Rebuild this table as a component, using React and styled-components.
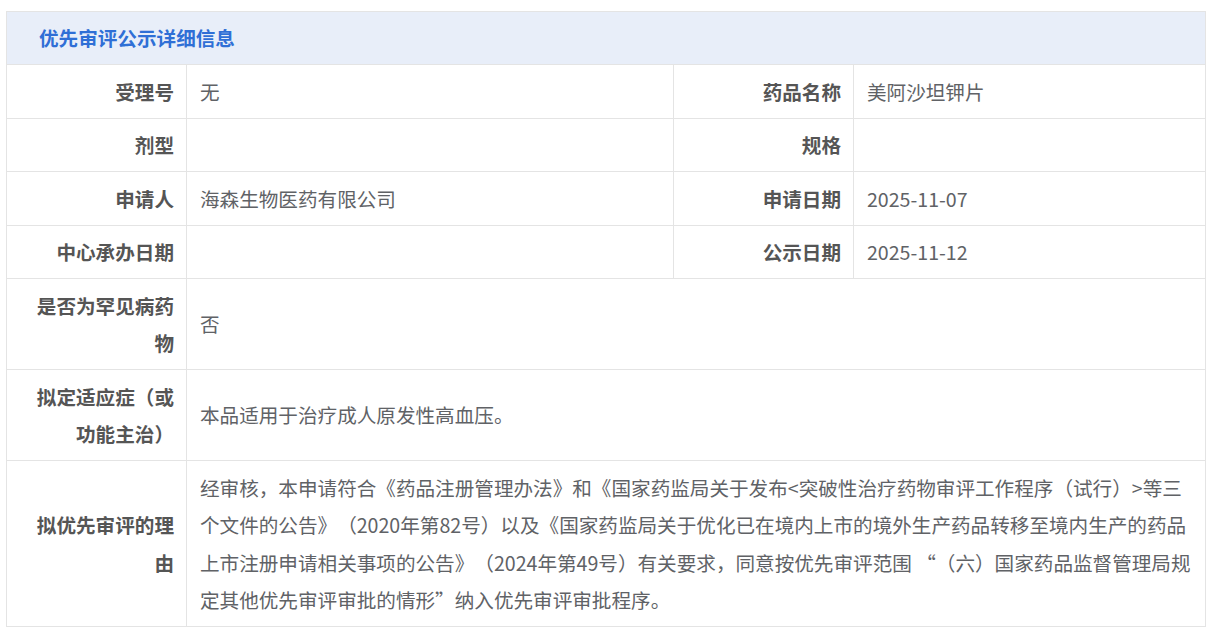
import React from "react";
import styled, { createGlobalStyle } from "styled-components";

const detail = {
  acceptNo: "无",
  drugName: "美阿沙坦钾片",
  dosageForm: "",
  spec: "",
  applicant: "海森生物医药有限公司",
  applyDate: "2025-11-07",
  centerDate: "",
  publicDate: "2025-11-12",
  rareDisease: "否",
  indication: "本品适用于治疗成人原发性高血压。",
  reason:
    "经审核，本申请符合《药品注册管理办法》和《国家药监局关于发布<突破性治疗药物审评工作程序（试行）>等三个文件的公告》（2020年第82号）以及《国家药监局关于优化已在境内上市的境外生产药品转移至境内生产的药品上市注册申请相关事项的公告》（2024年第49号）有关要求，同意按优先审评范围 “（六）国家药品监督管理局规定其他优先审评审批的情形”纳入优先审评审批程序。",
};

function App() {
  return (
    <>
      <GlobalStyle />
      <Page>
        <DetailTable>
          <colgroup>
            <col style={{ width: "180px" }} />
            <col style={{ width: "487px" }} />
            <col style={{ width: "180px" }} />
            <col />
          </colgroup>
          <thead>
            <tr>
              <HeaderCell colSpan={4}>优先审评公示详细信息</HeaderCell>
            </tr>
          </thead>
          <tbody>
            <tr>
              <Label>受理号</Label>
              <Value>{detail.acceptNo}</Value>
              <Label>药品名称</Label>
              <Value>{detail.drugName}</Value>
            </tr>
            <tr>
              <Label>剂型</Label>
              <Value>{detail.dosageForm}</Value>
              <Label>规格</Label>
              <Value>{detail.spec}</Value>
            </tr>
            <tr>
              <Label>申请人</Label>
              <Value>{detail.applicant}</Value>
              <Label>申请日期</Label>
              <Value>{detail.applyDate}</Value>
            </tr>
            <tr>
              <Label>中心承办日期</Label>
              <Value>{detail.centerDate}</Value>
              <Label>公示日期</Label>
              <Value>{detail.publicDate}</Value>
            </tr>
            <tr>
              <Label>是否为罕见病药物</Label>
              <Value colSpan={3}>{detail.rareDisease}</Value>
            </tr>
            <tr>
              <Label>拟定适应症（或功能主治）</Label>
              <Value colSpan={3}>{detail.indication}</Value>
            </tr>
            <tr>
              <Label>拟优先审评的理由</Label>
              <Value colSpan={3} $wide>
                {detail.reason}
              </Value>
            </tr>
          </tbody>
        </DetailTable>
      </Page>
    </>
  );
}

const GlobalStyle = createGlobalStyle`
  body {
    margin: 0;
    background: #ffffff;
    font-family: "Noto Sans CJK SC", "Noto Sans", sans-serif;
  }
`;

const Page = styled.div`
  padding: 11px 15px 12px 6px;
`;

const DetailTable = styled.table`
  width: 1200px;
  table-layout: fixed;
  border-collapse: collapse;
  border: 1px solid #e4e4e4;
  font-size: 19.6px;
  line-height: 37.5px;
  text-spacing-trim: space-all;
`;

const HeaderCell = styled.th`
  height: 52px;
  padding: 0 0 0 32px;
  text-align: left;
  background: #e8eef9;
  color: #2f6fd6;
  font-weight: 700;
  border: 1px solid #e4e4e4;
`;

const Label = styled.td`
  padding: 7.5px 12px 7.5px 20px;
  text-align: right;
  vertical-align: middle;
  color: #555555;
  font-weight: 700;
  border: 1px solid #e4e4e4;
`;

const Value = styled.td`
  padding: ${(props) => (props.$wide ? "7.5px 14px 7.5px 13px" : "7.5px 13px")};
  text-align: left;
  vertical-align: middle;
  color: #606266;
  border: 1px solid #e4e4e4;
  word-break: break-all;
`;

export default App;
